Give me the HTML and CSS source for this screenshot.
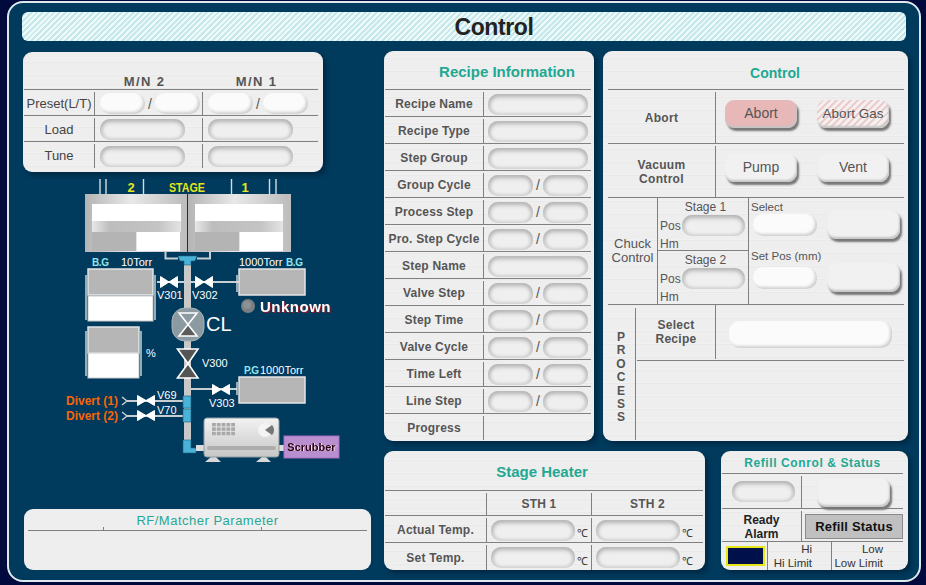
FILE: index.html
```html
<!DOCTYPE html>
<html>
<head>
  <title>Control</title>
  <link rel="stylesheet" href="styles.css">
</head>
<body>
  <div class="frame">
    <div class="title-bar">Control</div>

    <div class="main">
      <div class="left-col">
        <!-- Matcher -->
        <div class="panel mn">
          <div class="mn-head"><span></span><b>M/N 2</b><b>M/N 1</b></div>
          <div class="mn-row">
            <div class="lbl mn-preset">Preset(L/T)</div>
            <div class="val"><i class="pill raised small"></i><span class="slash">/</span><i class="pill raised small"></i></div>
            <div class="val"><i class="pill raised small"></i><span class="slash">/</span><i class="pill raised small"></i></div>
          </div>
          <div class="mn-row">
            <div class="lbl">Load</div>
            <div class="val"><i class="pill inset mn-wide"></i></div>
            <div class="val"><i class="pill inset mn-wide"></i></div>
          </div>
          <div class="mn-row">
            <div class="lbl">Tune</div>
            <div class="val"><i class="pill inset mn-wide"></i></div>
            <div class="val"><i class="pill inset mn-wide"></i></div>
          </div>
        </div>

        <!-- Gas line diagram, drawn in page coordinates -->
        <svg class="diagram" viewBox="24 172 348 337" width="348" height="337">
          <defs>
            <linearGradient id="chamber" x1="0" x2="1" y1="0" y2="0">
              <stop offset="0" stop-color="#b4b4b4"/>
              <stop offset=".45" stop-color="#e8e8e8"/>
              <stop offset="1" stop-color="#bcbcbc"/>
            </linearGradient>
            <linearGradient id="band" x1="0" x2="1" y1="0" y2="0">
              <stop offset="0" stop-color="#e8e8e8"/>
              <stop offset=".2" stop-color="#bdbdbd"/>
              <stop offset=".75" stop-color="#c4c4c4"/>
              <stop offset="1" stop-color="#e4e4e4"/>
            </linearGradient>
            <linearGradient id="pump" x1="0" x2="0" y1="0" y2="1">
              <stop offset="0" stop-color="#f2f2f2"/>
              <stop offset="1" stop-color="#c6c6c6"/>
            </linearGradient>
            <pattern id="keys" width="4.8" height="4.4" patternUnits="userSpaceOnUse" x="212" y="423">
              <rect width="3.8" height="3.4" fill="#a8a8a8"/>
            </pattern>
          </defs>

          <!-- lines above the chambers -->
          <g class="thin">
            <path d="M100 179V194M106 179V194M143.5 179V194M231.5 179V194M269.5 179V194M276 179V194"/>
          </g>
          <text class="stage" x="131" y="192" text-anchor="middle">2</text>
          <text class="stage" x="169" y="192" textLength="36" lengthAdjust="spacingAndGlyphs">STAGE</text>
          <text class="stage" x="245" y="192" text-anchor="middle">1</text>

          <!-- chambers -->
          <rect x="85" y="194" width="102" height="58" fill="url(#chamber)"/>
          <rect x="92" y="204" width="89" height="17" fill="#fff"/>
          <rect x="92" y="221" width="89" height="11" fill="url(#band)"/>
          <rect x="92" y="232" width="44" height="19" fill="#b4b4b4"/>
          <rect x="137" y="232" width="43" height="19" fill="#fff"/>
          <rect x="188" y="194" width="103" height="58" fill="url(#chamber)"/>
          <rect x="195" y="204" width="88" height="17" fill="#fff"/>
          <rect x="195" y="221" width="88" height="11" fill="url(#band)"/>
          <rect x="195" y="232" width="44" height="19" fill="#b4b4b4"/>
          <rect x="240" y="232" width="43" height="19" fill="#fff"/>

          <!-- main pipe -->
          <rect x="184" y="263" width="7" height="180" fill="#c8c8c8"/>
          <path class="pipe" d="M165.5 252V258.5H178M210 252V258.5H197"/>
          <path class="pipe" d="M157 282H239M191 389H237M127 401H184M127 416H184"/>
          <path class="thin" d="M237 275V292M237 382V395M86 275V320M155 275V320M86 331V376M141 331V376"/>
          <path class="chevron" d="M122 397L127 401L122 405M122 412L127 416L122 420"/>

          <!-- fittings -->
          <path class="fitting" d="M178 256H197L195 261H191V265H184V261H180Z"/>
          <path class="fitting" d="M183 396H191V408H183ZM183 409H191V422H183ZM183 440H191V448H196V453H183Z"/>

          <!-- gauges -->
          <rect class="gauge" x="88" y="269" width="65" height="26"/>
          <rect class="gauge-low" x="88" y="296" width="65" height="25"/>
          <rect class="gauge" x="239" y="269" width="66" height="26"/>
          <rect class="gauge" x="88" y="327" width="51" height="26"/>
          <rect class="gauge-low" x="88" y="353" width="51" height="25"/>
          <rect class="gauge" x="239" y="377" width="66" height="26"/>

          <!-- valves -->
          <path class="valve" d="M160.5 276.5L177.5 287.5V276.5L160.5 287.5Z"/>
          <path class="valve" d="M195.5 276.5L212.5 287.5V276.5L195.5 287.5Z"/>
          <path class="valve" d="M212.5 384.5L229.5 394.5V384.5L212.5 394.5Z"/>
          <path class="valve" d="M137.5 395.5L154.5 405.5V395.5L137.5 405.5Z"/>
          <path class="valve" d="M137.5 410.5L154.5 420.5V410.5L137.5 420.5Z"/>

          <!-- CL -->
          <rect x="172" y="308" width="32" height="33" rx="13" fill="#8c9aa2" stroke="#a9b4ba"/>
          <path d="M179 313H197L188 324.5Z" fill="#8c9aa2" stroke="#fff" stroke-width="1.6"/>
          <path d="M188 324.5L197 336H179Z" fill="#5c5c5c" stroke="#fff" stroke-width="1.6"/>
          <path d="M177.5 349H198L188 363.5Z" fill="#555" stroke="#fff" stroke-width="1.6"/>
          <path d="M188 363.5L198 378H177.5Z" fill="#555" stroke="#fff" stroke-width="1.6"/>

          <!-- unknown lamp -->
          <circle cx="248" cy="306" r="7" fill="#7b7f82"/>
          <circle cx="247" cy="305" r="4" fill="#8d9194"/>

          <!-- pump -->
          <rect x="196" y="445" width="9" height="6" fill="#ddd"/>
          <rect x="279" y="445" width="6" height="6" fill="#ddd"/>
          <path d="M205 462L211 457H216L221 462ZM256 462L262 457H266L271 462Z" fill="#d8d8d8"/>
          <rect x="204" y="418" width="75" height="39" rx="3" fill="url(#pump)" stroke="#8d9aa2"/>
          <rect x="212" y="423" width="24" height="13" fill="url(#keys)"/>
          <circle cx="265" cy="430" r="7" fill="#f4f4f4"/>
          <path d="M265 430L272 425A7 7 0 0 1 272 435Z" fill="#777"/>
          <rect x="207" y="446" width="69" height="4" rx="2" fill="#adadad"/>

          <!-- scrubber -->
          <rect x="284" y="436" width="55" height="22" fill="#b98fd0" stroke="#a56fc0"/>

          <text class="bg" x="92" y="266">B.G</text>
          <text class="lab" x="121" y="266">10Torr</text>
          <text class="lab" x="239" y="266">1000Torr</text>
          <text class="bg" x="286" y="266">B.G</text>
          <text class="lab" x="157" y="299">V301</text>
          <text class="lab" x="192" y="299">V302</text>
          <text class="unknown" x="260" y="312">Unknown</text>
          <text class="cl" x="206" y="331">CL</text>
          <text class="lab" x="146" y="357">%</text>
          <text class="lab" x="202" y="367">V300</text>
          <text class="bg" x="244" y="374">P.G</text>
          <text class="lab" x="260" y="374">1000Torr</text>
          <text class="lab" x="209" y="407">V303</text>
          <text class="lab" x="157" y="399">V69</text>
          <text class="lab" x="157" y="414">V70</text>
          <text class="divert" x="66" y="405">Divert (1)</text>
          <text class="divert" x="66" y="420">Divert (2)</text>
          <text class="scrubber" x="311.5" y="451" text-anchor="middle">Scrubber</text>
        </svg>

        <div class="panel rf">
          <div class="rf-title">RF/Matcher Parameter</div>
        </div>
      </div>

      <div class="right-col">
        <div class="top-row">
          <!-- Recipe -->
          <div class="panel recipe">
            <div class="recipe-title">Recipe Information</div>
            <div class="rc-row"><div class="lbl">Recipe Name</div><div class="val"><i class="pill inset rc-wide"></i></div></div>
            <div class="rc-row"><div class="lbl">Recipe Type</div><div class="val"><i class="pill inset rc-wide"></i></div></div>
            <div class="rc-row"><div class="lbl">Step Group</div><div class="val"><i class="pill inset rc-wide"></i></div></div>
            <div class="rc-row"><div class="lbl">Group Cycle</div><div class="val"><i class="pill inset small"></i><span class="slash">/</span><i class="pill inset small"></i></div></div>
            <div class="rc-row"><div class="lbl">Process Step</div><div class="val"><i class="pill inset small"></i><span class="slash">/</span><i class="pill inset small"></i></div></div>
            <div class="rc-row"><div class="lbl">Pro. Step Cycle</div><div class="val"><i class="pill inset small"></i><span class="slash">/</span><i class="pill inset small"></i></div></div>
            <div class="rc-row"><div class="lbl">Step Name</div><div class="val"><i class="pill inset rc-wide"></i></div></div>
            <div class="rc-row"><div class="lbl">Valve Step</div><div class="val"><i class="pill inset small"></i><span class="slash">/</span><i class="pill inset small"></i></div></div>
            <div class="rc-row"><div class="lbl">Step Time</div><div class="val"><i class="pill inset small"></i><span class="slash">/</span><i class="pill inset small"></i></div></div>
            <div class="rc-row"><div class="lbl">Valve Cycle</div><div class="val"><i class="pill inset small"></i><span class="slash">/</span><i class="pill inset small"></i></div></div>
            <div class="rc-row"><div class="lbl">Time Left</div><div class="val"><i class="pill inset small"></i><span class="slash">/</span><i class="pill inset small"></i></div></div>
            <div class="rc-row"><div class="lbl">Line Step</div><div class="val"><i class="pill inset small"></i><span class="slash">/</span><i class="pill inset small"></i></div></div>
            <div class="rc-row"><div class="lbl">Progress</div><div class="val"></div></div>
          </div>

          <!-- Control -->
          <div class="panel control">
            <div class="control-title">Control</div>
            <div class="ct-row">
              <div class="lbl">Abort</div>
              <div class="ct-buttons">
                <button class="btn btn-abort">Abort</button>
                <button class="btn btn-gas">Abort Gas</button>
              </div>
            </div>
            <div class="ct-row">
              <div class="lbl">Vacuum<br>Control</div>
              <div class="ct-buttons">
                <button class="btn">Pump</button>
                <button class="btn">Vent</button>
              </div>
            </div>
            <div class="chuck">
              <div class="chuck-name">Chuck<br>Control</div>
              <div class="stages">
                <div class="stage-box">
                  <div class="stage-name">Stage 1</div>
                  <div class="stage-pos">Pos<i class="pill inset stage-pill"></i></div>
                  <div class="stage-hm">Hm</div>
                </div>
                <div class="stage-box">
                  <div class="stage-name">Stage 2</div>
                  <div class="stage-pos">Pos<i class="pill inset stage-pill"></i></div>
                  <div class="stage-hm">Hm</div>
                </div>
              </div>
              <div class="chuck-set">
                <div class="set-group">
                  <div class="set-name">Select</div>
                  <div class="set-row"><i class="pill raised set-pill"></i><button class="btn set-btn"></button></div>
                </div>
                <div class="set-group">
                  <div class="set-name">Set Pos (mm)</div>
                  <div class="set-row"><i class="pill raised set-pill"></i><button class="btn set-btn"></button></div>
                </div>
              </div>
            </div>
            <div class="process">
              <div class="process-name"><span>P</span><span>R</span><span>O</span><span>C</span><span>E</span><span>S</span><span>S</span></div>
              <div class="process-main">
                <div class="process-row">
                  <div class="lbl">Select<br>Recipe</div>
                  <div class="recipe-pick"><i class="pill raised pick-pill"></i></div>
                </div>
              </div>
            </div>
          </div>
        </div>

        <div class="bottom-row">
          <!-- Stage heater -->
          <div class="panel heater">
            <div class="heater-title">Stage Heater</div>
            <div class="ht-row ht-head"><div class="lbl"></div><div class="lbl">STH 1</div><div class="lbl">STH 2</div></div>
            <div class="ht-row">
              <div class="lbl">Actual Temp.</div>
              <div class="val"><i class="pill inset ht-pill"></i><span class="unit">℃</span></div>
              <div class="val"><i class="pill inset ht-pill"></i><span class="unit">℃</span></div>
            </div>
            <div class="ht-row">
              <div class="lbl">Set Temp.</div>
              <div class="val"><i class="pill inset ht-pill"></i><span class="unit">℃</span></div>
              <div class="val"><i class="pill inset ht-pill"></i><span class="unit">℃</span></div>
            </div>
          </div>

          <!-- Refill -->
          <div class="panel refill">
            <div class="refill-title">Refill Conrol &amp; Status</div>
            <div class="rf-row rf-top">
              <div class="val"><i class="pill inset refill-pill"></i></div>
              <div class="val"><button class="btn refill-btn"></button></div>
            </div>
            <div class="rf-row rf-mid">
              <div class="ready">Ready<br>Alarm</div>
              <div class="val"><div class="refill-status">Refill Status</div></div>
            </div>
            <div class="rf-limits">
              <div class="alarm-cell"><div class="alarm-box"></div></div>
              <div class="limit limit-hi">Hi<br>Hi Limit</div>
              <div class="limit limit-low">Low<br>Low Limit</div>
            </div>
          </div>
        </div>
      </div>
    </div>
  </div>
</body>
</html>
```

FILE: styles.css
```css
/* Control screen */
html, body {
  margin: 0;
  height: 100%;
  overflow: hidden;
  background-color: #000a3c;
}
body {
  font-family: "Liberation Sans", Arial, sans-serif;
  color: #555;
}
.frame {
  box-sizing: border-box;
  width: 914px;
  height: 581px;
  margin: 1px 0 0 7px;
  padding: 9px 0 0 13px;
  background-color: #003a5c;
  border: 2px solid #dfe8ee;
  border-radius: 16px;
}
.title-bar {
  box-sizing: border-box;
  width: 884px;
  height: 29px;
  padding-left: 60px;
  text-align: center;
  font-size: 23px;
  font-weight: bold;
  line-height: 30px;
  letter-spacing: -.4px;
  color: #222;
  border-radius: 6px;
  background: repeating-linear-gradient(135deg, #eef9f9 0 2px, #c6e8ea 2px 4px);
}
.main {
  display: flex;
  gap: 13px;
  margin: 10px 0 0 1px;
}

/* panels */
.panel {
  box-sizing: border-box;
  border-radius: 9px;
  background-color: #eee;
  background-image: repeating-linear-gradient(0deg, #eee 0 5px, #e9e9e9 5px 6px, #f1f1f1 6px 7px, #eee 7px 13px);
  box-shadow: 3px 3px 4px #002844;
}
.lbl {
  display: flex;
  align-items: center;
  justify-content: center;
  text-align: center;
  font-size: 13px;
  font-weight: bold;
  line-height: 14px;
}
.val {
  display: flex;
  align-items: center;
}
.slash {
  width: 10px;
  text-align: center;
  font-size: 14px;
}

/* pills and buttons */
.pill {
  display: block;
  box-sizing: border-box;
  height: 21px;
  border-radius: 10px;
}
.inset {
  background-color: #efefef;
  box-shadow: inset 0 3px 4px #b4b4b4, inset 0 -2px 3px #d8d8d8, inset 3px 0 3px #d4d4d4, inset -3px 0 3px #d4d4d4;
}
.raised {
  background-color: #fbfbfb;
  box-shadow: inset -2px -2px 3px #cfcfcf;
}
.small {
  width: 45px;
}
.btn {
  box-sizing: border-box;
  width: 72px;
  height: 28px;
  padding: 0 0 2px;
  border: none;
  border-radius: 9px;
  font-family: "Liberation Sans", Arial, sans-serif;
  font-size: 14px;
  color: #555;
  background-color: #f1f1f1;
  box-shadow: inset -1px -2px 2px #c4c4c4, 2px 3px 2px #777;
}
.btn-abort {
  background-color: #e8b8b8;
}
.btn-gas {
  font-size: 13.5px;
  background: repeating-linear-gradient(135deg, #f4f0f0 0 3px, #eccccc 3px 5px);
}

/* left column */
.left-col {
  display: flex;
  flex-direction: column;
  width: 348px;
}
.mn {
  width: 300px;
  height: 120px;
  margin-top: 1px;
  padding-left: 1px;
}
.mn-head {
  display: grid;
  grid-template-columns: 70px 108px 116px;
  height: 38px;
  border-bottom: 1px solid #808080;
  box-sizing: border-box;
  width: 294px;
}
.mn-head b {
  padding-top: 22px;
  padding-right: 7px;
  text-align: center;
  font-size: 13px;
  letter-spacing: 1.4px;
  white-space: pre;
}
.mn-row {
  display: grid;
  grid-template-columns: 70px 108px 116px;
  width: 294px;
  height: 26px;
  box-sizing: border-box;
  border-bottom: 1px solid #808080;
}
.mn-row:last-child {
  border-bottom: none;
}
.mn-row .lbl {
  font-weight: normal;
  font-size: 13px;
  color: #444;
  margin-top: 2px;
}
.mn-row .val {
  margin-top: 2px;
  padding-left: 5px;
  border-left: 1px solid #808080;
}
.mn-wide {
  width: 85px;
}
.diagram {
  display: block;
  margin-left: 1px;
}
.rf {
  width: 347px;
  height: 61px;
  margin-left: 1px;
  border-radius: 9px;
  padding: 0 4px;
  background-image: none;
  box-shadow: none;
}
.rf-title {
  box-sizing: border-box;
  height: 22px;
  padding-left: 20px;
  border-bottom: 1px solid #808080;
  text-align: center;
  font-size: 13px;
  line-height: 23px;
  color: #2aa897;
  letter-spacing: .5px;
  background-image: linear-gradient(#808080, #808080), linear-gradient(#808080, #808080);
  background-repeat: no-repeat;
  background-size: 1px 3px;
  background-position: 75px 18px, 233px 18px;
}

/* diagram */
.thin {
  fill: none;
  stroke: #d4dce0;
  stroke-width: 1.4;
}
.pipe {
  fill: none;
  stroke: #c8ced2;
  stroke-width: 2;
}
.chevron {
  fill: none;
  stroke: #c8ced2;
  stroke-width: 1.5;
}
.fitting {
  fill: #49b2d6;
  stroke: #1c5e7c;
  stroke-width: .6;
}
.gauge {
  fill: #b6b6b6;
  stroke: #e4e4e4;
  stroke-width: 1.5;
}
.gauge-low {
  fill: #fff;
  stroke: #c8c8c8;
  stroke-width: 1;
}
.valve {
  fill: #fff;
  stroke: #fff;
  stroke-width: 1;
}
.stage {
  font-size: 13px;
  font-weight: bold;
  fill: #e6e619;
}
.lab {
  font-size: 11px;
  fill: #fff;
}
.bg {
  font-size: 10px;
  font-weight: bold;
  letter-spacing: -.4px;
  fill: #8fe6f0;
}
.unknown {
  font-size: 15px;
  font-weight: bold;
  fill: #fff;
  letter-spacing: .5px;
  filter: drop-shadow(1px 1px 0 #8a1c2c);
}
.cl {
  font-size: 20px;
  fill: #fff;
}
.divert {
  font-size: 12px;
  font-weight: bold;
  fill: #f86408;
}
.scrubber {
  font-size: 11px;
  font-weight: bold;
  fill: #2a0010;
  filter: drop-shadow(1px 0 0 #f4e4f8);
}

/* right side */
.right-col {
  display: flex;
  flex-direction: column;
  gap: 10px;
}
.top-row {
  display: flex;
  gap: 9px;
  height: 390px;
}
.bottom-row {
  display: flex;
  gap: 16px;
  height: 119px;
}

/* recipe information */
.recipe {
  width: 210px;
  padding: 0 3px 0 1px;
}
.recipe-title {
  height: 38px;
  padding-left: 38px;
  text-align: center;
  font-size: 15px;
  font-weight: bold;
  line-height: 42px;
  color: #1fa893;
}
.rc-row {
  display: grid;
  grid-template-columns: 98px 1fr;
  height: 27px;
  box-sizing: border-box;
  border-top: 1px solid #808080;
}
.rc-row .lbl {
  margin-top: 2px;
  font-size: 12px;
  letter-spacing: .2px;
}
.rc-row .val {
  margin-top: 2px;
  padding-left: 4px;
  border-left: 1px solid #808080;
}
.rc-wide {
  width: 100px;
}

/* control */
.control {
  width: 305px;
  padding: 0 4px 0 5px;
}
.control-title {
  height: 38px;
  padding-left: 38px;
  text-align: center;
  font-size: 14px;
  font-weight: bold;
  line-height: 45px;
  color: #1fa893;
}
.ct-row {
  display: grid;
  grid-template-columns: 107px 1fr;
  height: 54px;
  box-sizing: border-box;
  border-top: 1px solid #808080;
}
.ct-row .lbl {
  margin-top: 2px;
  font-size: 12px;
  line-height: 14px;
  letter-spacing: .3px;
}
.ct-buttons {
  display: flex;
  gap: 20px;
  margin-top: 2px;
  padding: 8px 0 0 9px;
  border-left: 1px solid #808080;
}
.chuck {
  display: grid;
  grid-template-columns: 49px 92px 1fr;
  height: 108px;
  box-sizing: border-box;
  border-top: 1px solid #808080;
  border-bottom: 1px solid #808080;
}
.chuck-name {
  display: flex;
  align-items: center;
  justify-content: center;
  text-align: center;
  font-size: 13px;
  line-height: 14px;
}
.stages {
  border-left: 1px solid #808080;
  border-right: 1px solid #808080;
  font-size: 12px;
}
.stage-box {
  box-sizing: border-box;
  height: 53px;
  padding: 3px 0 0 2px;
}
.stage-box:first-child {
  border-bottom: 1px solid #808080;
}
.stage-name {
  height: 13px;
  line-height: 13px;
  padding-left: 3px;
  text-align: center;
}
.stage-pos {
  display: flex;
  align-items: center;
  height: 21px;
  gap: 1px;
  margin-top: 1px;
}
.stage-pill {
  width: 63px;
}
.stage-hm {
  margin-top: 2px;
  line-height: 13px;
}
.chuck-set {
  padding: 3px 0 0 2px;
}
.set-group {
  height: 48px;
  font-size: 11.5px;
}
.set-name {
  height: 13px;
  line-height: 13px;
}
.set-row {
  display: flex;
  align-items: flex-start;
  gap: 10px;
  margin-left: 2px;
}
.set-group:first-child .set-row {
  margin-top: -4px;
}
.set-group:last-child {
  margin-top: 1px;
}
.set-pill {
  width: 64px;
  height: 22px;
  margin-top: 4px;
}
.set-btn {
  width: 73px;
  height: 29px;
}
.process {
  display: grid;
  grid-template-columns: 28px 1fr;
  height: 135px;
}
.process-name {
  display: flex;
  flex-direction: column;
  align-items: center;
  margin-top: 3px;
  padding: 23px 1px 0 0;
  border-right: 1px solid #808080;
  font-size: 12px;
  font-weight: bold;
  line-height: 13.4px;
}
.process-row {
  display: grid;
  grid-template-columns: 79px 1fr;
  height: 55px;
  margin-left: 1px;
  border-bottom: 1px solid #808080;
}
.process-row .lbl {
  font-size: 12px;
  letter-spacing: .3px;
  border-right: 1px solid #808080;
  margin-bottom: 1px;
}
.recipe-pick {
  padding: 16px 0 0 13px;
}
.pick-pill {
  width: 163px;
  height: 27px;
  border-radius: 11px;
}

/* stage heater */
.heater {
  width: 321px;
  padding: 0 2px 0 1px;
}
.heater-title {
  height: 39px;
  padding-right: 4px;
  text-align: center;
  font-size: 15px;
  font-weight: bold;
  line-height: 42px;
  color: #1fa893;
}
.ht-row {
  display: grid;
  grid-template-columns: 101px 105px 1fr;
  height: 27px;
  box-sizing: border-box;
  border-top: 1px solid #808080;
}
.ht-head {
  height: 25px;
}
.ht-row .lbl {
  margin-top: 2px;
  font-size: 12px;
  letter-spacing: .2px;
}
.ht-row .val {
  margin-top: 2px;
  padding-left: 4px;
  border-left: 1px solid #808080;
}
.ht-head .lbl:nth-child(n+2) {
  border-left: 1px solid #808080;
}
.ht-row + .ht-row + .ht-row {
  height: 28px;
}
.ht-pill {
  width: 84px;
}
.unit {
  margin: 5px 0 0 2px;
  font-size: 11px;
  color: #333;
}

/* refill */
.refill {
  width: 187px;
  padding: 0 5px 0 1px;
}
.refill-title {
  height: 22px;
  text-align: center;
  font-size: 12px;
  font-weight: bold;
  line-height: 24px;
  letter-spacing: .6px;
  color: #1fa893;
}
.rf-row {
  display: grid;
  grid-template-columns: 79px 1fr;
  box-sizing: border-box;
  border-top: 1px solid #808080;
}
.rf-top {
  height: 35px;
}
.rf-top .val:first-child {
  padding: 0 0 0 10px;
}
.rf-top .val:last-child {
  margin-top: 2px;
  padding-left: 15px;
  border-left: 1px solid #808080;
}
.rf-mid {
  height: 33px;
}
.rf-mid .val {
  margin-top: 2px;
  padding-left: 3px;
  border-left: 1px solid #808080;
}
.refill-pill {
  width: 63px;
}
.refill-btn {
  width: 73px;
  height: 29px;
}
.ready {
  padding-top: 4px;
  text-align: center;
  font-size: 12px;
  font-weight: bold;
  line-height: 14px;
  color: #222;
}
.refill-status {
  box-sizing: border-box;
  width: 98px;
  height: 25px;
  text-align: center;
  font-size: 13px;
  font-weight: bold;
  line-height: 24px;
  letter-spacing: .2px;
  color: #111;
  background-color: #c0c0c0;
  border: 1px solid #8a8a8a;
}
.rf-limits {
  display: grid;
  grid-template-columns: 45px 64px 1fr;
  height: 29px;
  box-sizing: border-box;
  border-top: 1px solid #808080;
}
.alarm-cell {
  padding: 4px 0 0 4px;
}
.alarm-box {
  box-sizing: border-box;
  width: 39px;
  height: 20px;
  background-color: #00104a;
  border: 2px solid #e6e619;
}
.limit {
  border-left: 1px solid #808080;
  text-align: right;
  font-size: 11.5px;
  line-height: 14px;
  color: #333;
}
.limit-hi {
  padding-right: 19px;
}
.limit-low {
  padding-right: 20px;
}
```
